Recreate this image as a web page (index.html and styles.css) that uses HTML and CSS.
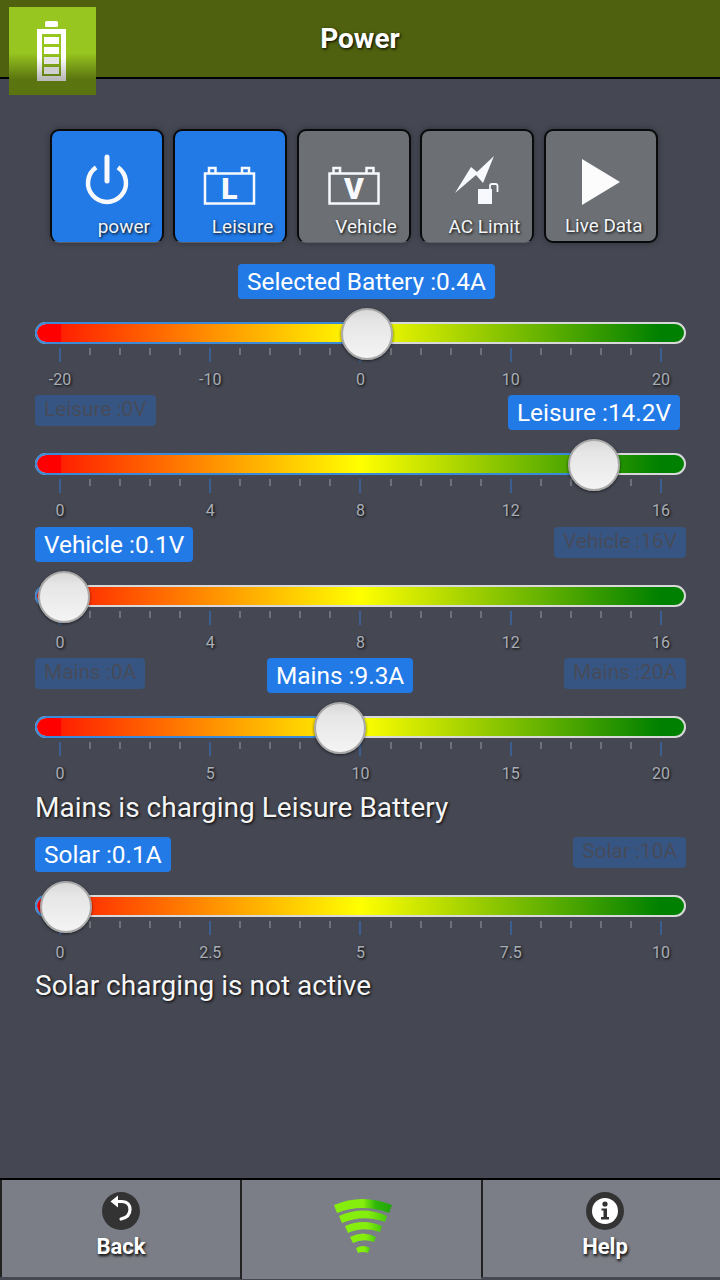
FILE: index.html
```html
<!DOCTYPE html>
<html lang="en">
<head>
	<meta charset="UTF-8">
	<title>Power</title>
	<link rel="stylesheet" href="styles.css">
</head>
<body>
	<div class="app">
		<header class="top">
			<div class="logo">
				<svg width="87" height="88" viewBox="0 0 87 88">
					<defs>
						<linearGradient id="batt" x1="0" y1="0" x2="0" y2="1">
							<stop offset="0.55" stop-color="#fff"/>
							<stop offset="1" stop-color="#bbb"/>
						</linearGradient>
					</defs>
					<rect x="36" y="14" width="13" height="6" rx="1.5" fill="#fff"/>
					<rect x="30.500" y="24.500" width="24" height="47" fill="none" stroke="url(#batt)" stroke-width="5"/>
					<rect x="35" y="30" width="15" height="7" fill="#fff"/>
					<rect x="35" y="40" width="15" height="7" fill="#fff"/>
					<rect x="35" y="50" width="15" height="7" fill="#e4e4e4"/>
					<rect x="35" y="60" width="15" height="7" fill="#cfcfcf"/>
				</svg>
			</div>
			<h1 class="title">Power</h1>
		</header>

		<main class="content">
			<div class="buttons">
				<div class="btn on">
					<svg width="60" height="60" viewBox="0 0 60 60">
						<path d="M19.1 14.4A19 19 0 1 0 40.9 14.4" fill="none" stroke="#f7f9fd" stroke-width="4.5"/>
						<path d="M30 4V28" fill="none" stroke="#f7f9fd" stroke-width="5" stroke-linecap="round"/>
					</svg>
					<span class="btn-name">power</span>
				</div>
				<div class="btn on">
					<svg width="60" height="60" viewBox="0 0 60 60">
						<rect x="5" y="20.5" width="49" height="30" fill="none" stroke="#f7f9fd" stroke-width="2.5"/>
						<path d="M9 20V15H15.500V20M42 20V15H49V20" fill="none" stroke="#f7f9fd" stroke-width="2.500"/>
						<text class="batt-letter" x="29.500" y="46" text-anchor="middle">L</text>
					</svg>
					<span class="btn-name">Leisure</span>
				</div>
				<div class="btn">
					<svg width="60" height="60" viewBox="0 0 60 60">
						<rect x="5.500" y="20.5" width="49" height="30" fill="none" stroke="#f7f9fd" stroke-width="2.5"/>
						<path d="M9.500 20V15H16V20M42.500 20V15H49.500V20" fill="none" stroke="#f7f9fd" stroke-width="2.500"/>
						<text class="batt-letter" x="30" y="46" text-anchor="middle">V</text>
					</svg>
					<span class="btn-name">Vehicle</span>
				</div>
				<div class="btn">
					<svg width="60" height="60" viewBox="0 0 60 60">
						<path d="M8 40L24 14L30 19L47 3L36 30L29 22Z" fill="#f7f9fd"/>
						<rect x="31" y="36" width="14" height="15" fill="#f7f9fd"/>
						<path d="M43 36V33Q43 31 45 31H48.500Q50.500 31 50.500 33V39" fill="none" stroke="#f7f9fd" stroke-width="1.800"/>
					</svg>
					<span class="btn-name">AC Limit</span>
				</div>
				<div class="btn live">
					<svg width="60" height="60" viewBox="0 0 60 60">
						<path d="M11 6L49 29L11 52Z" fill="#fcfcfd"/>
					</svg>
					<span class="btn-name">Live Data</span>
				</div>
			</div>

			<section class="gauge">
				<div class="tags">
					<span class="tag value float" style="left:203px">Selected Battery :0.4A</span>
				</div>
				<div class="track">
					<div class="fill" style="width:331px"></div>
					<div class="thumb" style="left:304px"></div>
				</div>
				<div class="ticks">
					<i class="major"></i><i></i><i></i><i></i><i></i><i class="major"></i><i></i><i></i><i></i><i></i><i class="major"></i><i></i><i></i><i></i><i></i><i class="major"></i><i></i><i></i><i></i><i></i><i class="major"></i>
				</div>
				<div class="nums"><span>-20</span><span>-10</span><span>0</span><span>10</span><span>20</span></div>
			</section>

			<section class="gauge">
				<div class="tags">
					<span class="tag limit">Leisure :0V</span>
					<span class="tag value float" style="right:6px">Leisure :14.2V</span>
				</div>
				<div class="track">
					<div class="fill" style="width:559px"></div>
					<div class="thumb" style="left:531px"></div>
				</div>
				<div class="ticks">
					<i class="major"></i><i></i><i></i><i></i><i></i><i class="major"></i><i></i><i></i><i></i><i></i><i class="major"></i><i></i><i></i><i></i><i></i><i class="major"></i><i></i><i></i><i></i><i></i><i class="major"></i>
				</div>
				<div class="nums"><span>0</span><span>4</span><span>8</span><span>12</span><span>16</span></div>
			</section>

			<section class="gauge">
				<div class="tags">
					<span class="tag value">Vehicle :0.1V</span>
					<span class="tag limit">Vehicle :16V</span>
				</div>
				<div class="track">
					<div class="fill" style="width:29px"></div>
					<div class="thumb" style="left:1px"></div>
				</div>
				<div class="ticks">
					<i class="major"></i><i></i><i></i><i></i><i></i><i class="major"></i><i></i><i></i><i></i><i></i><i class="major"></i><i></i><i></i><i></i><i></i><i class="major"></i><i></i><i></i><i></i><i></i><i class="major"></i>
				</div>
				<div class="nums"><span>0</span><span>4</span><span>8</span><span>12</span><span>16</span></div>
			</section>

			<section class="gauge">
				<div class="tags">
					<span class="tag limit">Mains :0A</span>
					<span class="tag value float" style="left:232px">Mains :9.3A</span>
					<span class="tag limit">Mains :20A</span>
				</div>
				<div class="track">
					<div class="fill" style="width:305px"></div>
					<div class="thumb" style="left:277px"></div>
				</div>
				<div class="ticks">
					<i class="major"></i><i></i><i></i><i></i><i></i><i class="major"></i><i></i><i></i><i></i><i></i><i class="major"></i><i></i><i></i><i></i><i></i><i class="major"></i><i></i><i></i><i></i><i></i><i class="major"></i>
				</div>
				<div class="nums"><span>0</span><span>5</span><span>10</span><span>15</span><span>20</span></div>
			</section>
			<p class="status">Mains is charging Leisure Battery</p>

			<section class="gauge">
				<div class="tags">
					<span class="tag value">Solar :0.1A</span>
					<span class="tag limit">Solar :10A</span>
				</div>
				<div class="track">
					<div class="fill" style="width:31px"></div>
					<div class="thumb" style="left:3px"></div>
				</div>
				<div class="ticks">
					<i class="major"></i><i></i><i></i><i></i><i></i><i class="major"></i><i></i><i></i><i></i><i></i><i class="major"></i><i></i><i></i><i></i><i></i><i class="major"></i><i></i><i></i><i></i><i></i><i class="major"></i>
				</div>
				<div class="nums"><span>0</span><span>2.5</span><span>5</span><span>7.5</span><span>10</span></div>
			</section>
			<p class="status">Solar charging is not active</p>
		</main>

		<footer class="bottom">
			<div class="cell first">
				<svg width="38" height="38" viewBox="0 0 38 38">
					<circle cx="19" cy="19" r="19" fill="#333"/>
					<path d="M15 9.500H20Q28 10 28 17.500T19 27" fill="none" stroke="#fff" stroke-width="3.200" stroke-linecap="round"/>
					<path d="M8.500 9.500L16 3.500V15.500Z" fill="#fff"/>
				</svg>
				<span class="cell-name">Back</span>
			</div>
			<div class="cell mid">
				<svg class="signal" width="62" height="56" viewBox="0 0 62 56">
					<defs>
						<linearGradient id="wave" x1="0" y1="0" x2="1" y2="0">
							<stop offset="0.5" stop-color="#86ee0c"/>
							<stop offset="0.72" stop-color="#2fb70a"/>
							<stop offset="1" stop-color="#1fa507"/>
						</linearGradient>
						<linearGradient id="wave2" x1="0" y1="0" x2="1" y2="0">
							<stop offset="0.6" stop-color="#86ee0c"/>
							<stop offset="1" stop-color="#48c90a"/>
						</linearGradient>
					</defs>
					<path d="M3 7Q31 -5 61 7L58 15Q31 5 6 15Z" fill="url(#wave)"/>
					<path d="M8 18Q32 7 56 18L54 24Q32 16 11 25Z" fill="url(#wave2)"/>
					<path d="M14 28Q32 20 51 28L49 34Q32 28 17 35Z" fill="url(#wave2)"/>
					<path d="M19 39Q32 32 45 39L43 44Q32 40 22 45Z" fill="url(#wave2)"/>
					<path d="M25 50Q32 46 39 50L37 55Q32 53 27 55Z" fill="url(#wave2)"/>
				</svg>
			</div>
			<div class="cell last">
				<svg width="38" height="38" viewBox="0 0 38 38">
					<circle cx="19" cy="19" r="19" fill="#333"/>
					<circle cx="19" cy="19" r="13" fill="#fff"/>
					<circle cx="19" cy="12" r="2.600" fill="#333"/>
					<path d="M15.500 16.500H21V25H23V27.500H15V25H17.500V18.500H15.500Z" fill="#333"/>
				</svg>
				<span class="cell-name">Help</span>
			</div>
		</footer>
	</div>
</body>
</html>
```

FILE: styles.css
```css
* {
	box-sizing: border-box;
}

body {
	margin: 0;
	background-color: #454853;
	font-family: Roboto, "Liberation Sans", sans-serif;
	color: #fff;
}

.app {
	width: 720px;
	height: 1280px;
	display: flex;
	flex-direction: column;
	position: relative;
	overflow: hidden;
}

/* header */
.top {
	height: 79px;
	flex: none;
	background-color: #4f600e;
	border-bottom: 2px solid #000;
	display: flex;
	justify-content: center;
	align-items: center;
}

.title {
	margin: 0;
	font-size: 28px;
	font-weight: 700;
	text-shadow: 1px 1px 3px #000;
}

.logo {
	position: absolute;
	left: 9px;
	top: 7px;
	width: 87px;
	height: 88px;
	background: linear-gradient(to bottom, #98c620 0%, #98c620 52%, #5b7510 82%, #5a7410 100%);
}

.logo svg {
	display: block;
}

/* main area */
.content {
	flex: 1;
	padding: 50px 34px 0 35px;
}

.buttons {
	display: flex;
	gap: 9.4px;
	margin: 0 27px 21px 15px;
}

.btn {
	width: 114px;
	height: 114px;
	flex: none;
	border: 2px solid #0a0a0c;
	border-bottom: 1px solid #5b6068;
	border-radius: 9px;
	background-color: #6c7074;
	box-shadow: 0 0 6px rgba(0, 0, 0, .35);
	padding-top: 22px;
	display: flex;
	flex-direction: column;
	align-items: center;
}

.btn.on {
	background-color: #227ae6;
}

.btn.live {
	border-bottom: 2px solid #0a0a0c;
}

.btn-name {
	align-self: flex-end;
	margin: 3px 12px 0 0;
	font-size: 19px;
	line-height: 22px;
	color: #f2f4f7;
	text-shadow: 1px 1px 3px #000;
}

.live .btn-name {
	margin: 2px 13px 0 0;
	font-size: 18.9px;
}

.batt-letter {
	font-family: Roboto, sans-serif;
	font-size: 30px;
	font-weight: 900;
	fill: #f7f9fd;
}

/* sliders */
.gauge {
	height: 131.4px;
}

.tags {
	height: 36px;
	margin-bottom: 22px;
	display: flex;
	justify-content: space-between;
	align-items: flex-start;
	position: relative;
}

.tag {
	font-size: 24.4px;
	line-height: 35px;
	height: 35px;
	padding: 0 9px;
	border-radius: 4px;
	white-space: nowrap;
}

.value {
	background-color: #227ae6;
	color: #fff;
}

.float {
	position: absolute;
	top: 0;
}

.limit {
	background-color: #365583;
	color: #474b59;
	font-size: 20.8px;
	line-height: 28px;
	height: 31px;
}

.track {
	height: 22px;
	position: relative;
	border: 2px solid #d8d8d8;
	border-radius: 11px;
	background: linear-gradient(to right, #f00 3.7%, #ff2000 3.8%, #ff0 50%, #008000 96.3%);
}

.fill {
	position: absolute;
	left: -2px;
	top: -2px;
	height: 22px;
	border: 2px solid #3b8ad8;
	border-right: 0;
	border-radius: 11px 0 0 11px;
}

.thumb {
	position: absolute;
	top: -16px;
	width: 52px;
	height: 52px;
	border-radius: 50%;
	border: 2px solid #a9a9a9;
	background: linear-gradient(to bottom, #d8d8d8 0%, #e6e6e6 25%, #f4f4f4 100%);
	box-shadow: 0 1px 3px rgba(0, 0, 0, .6);
}

.ticks {
	display: flex;
	justify-content: space-between;
	margin: 4px 24px 0;
	height: 14px;
	align-items: flex-start;
}

.ticks i {
	width: 2px;
	height: 7px;
	background-color: #6e7179;
}

.ticks .major {
	height: 14px;
	background-color: #3a5f90;
}

.nums {
	display: flex;
	justify-content: space-between;
	margin: 9px 25px 0;
	height: 18px;
}

.nums span {
	width: 0;
	display: flex;
	justify-content: center;
	font-size: 16px;
	line-height: 18px;
	color: #a9adb5;
	text-shadow: 1px 1px 3px #000;
}

.status {
	margin: 0;
	height: 47.4px;
	font-size: 28px;
	line-height: 35px;
	color: #f5f5f5;
	text-shadow: 1px 1px 3px #000;
}

/* footer */
.bottom {
	height: 100px;
	flex: none;
	margin-bottom: 2px;
	border-top: 2px solid #000;
	display: flex;
}

.cell {
	width: 241px;
	margin-bottom: 1px;
	background-color: #7b7e86;
	border-left: 2px solid #222;
	display: flex;
	flex-direction: column;
	align-items: center;
	padding-top: 12px;
}

.first {
	width: 240px;
}

.mid {
	margin-bottom: -1px;
	padding-top: 18px;
}

.last {
	width: 239px;
	padding-left: 7px;
}

.cell-name {
	font-size: 22px;
	font-weight: 700;
	line-height: 26px;
	margin-top: 4px;
	text-shadow: 1px 2px 3px #000;
}

.signal {
	display: block;
}
```
